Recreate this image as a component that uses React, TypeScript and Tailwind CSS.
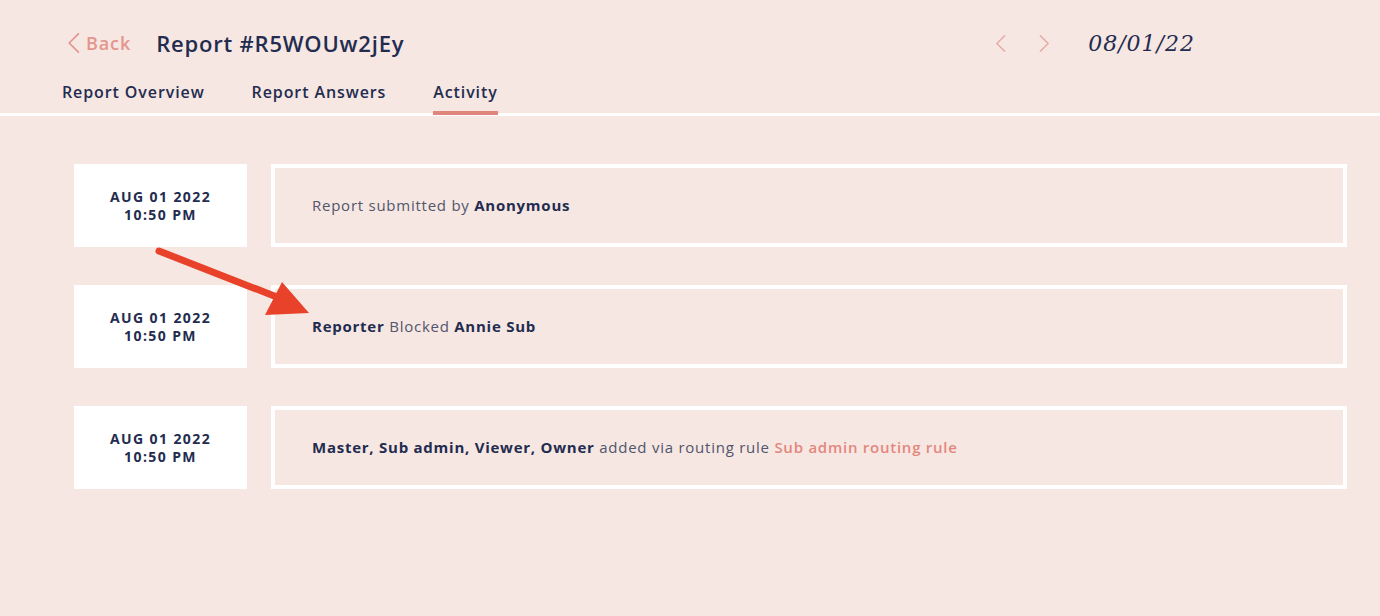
import React from "react";

const navy = "text-[#232c4f]";

function Chevron({ dir, className }: { dir: "left" | "right"; className?: string }) {
  return (
    <svg width="12" height="20" viewBox="0 0 12 20" className={className} fill="none">
      {dir === "left" ? (
        <path d="M10.5 1.5 L2 10 L10.5 18.5" stroke="currentColor" strokeWidth="1.6" strokeLinecap="round" strokeLinejoin="round" />
      ) : (
        <path d="M1.5 1.5 L10 10 L1.5 18.5" stroke="currentColor" strokeWidth="1.6" strokeLinecap="round" strokeLinejoin="round" />
      )}
    </svg>
  );
}

function DateCard() {
  return (
    <div className={`w-[173px] h-[83px] shrink-0 bg-white flex flex-col items-center justify-center text-[14px] font-bold leading-[18px] tracking-[1.4px] ${navy}`}>
      <div>AUG 01 2022</div>
      <div>10:50 PM</div>
    </div>
  );
}

function Row({ children }: { children: React.ReactNode }) {
  return (
    <div className="flex gap-[24px] items-stretch">
      <DateCard />
      <div className="flex-1 h-[83px] border-[4px] border-white flex items-center pl-[37px] text-[15px] tracking-[0.75px] text-[#51566b]">
        <div>{children}</div>
      </div>
    </div>
  );
}

export default function App() {
  return (
    <div
      className="relative w-[1380px] h-[616px] bg-[#f6e7e3] overflow-hidden"
      style={{ fontFamily: '"Open Sans", "Liberation Sans", sans-serif' }}
    >
      {/* Header */}
      <div className="relative pl-[62px] pr-[185px] pt-[29px]">
        <div className="flex items-center h-[28px]">
          <div className="flex items-center text-[#e4958c] pl-[5px]">
            <Chevron dir="left" className="w-[13px] h-[22px]" />
            <span className="ml-[6px] text-[18px] font-semibold tracking-[0.9px]">Back</span>
          </div>
          <div className={`ml-[25px] text-[22px] font-semibold tracking-[0.8px] ${navy}`}>Report #R5WOUw2jEy</div>
          <div className="ml-auto flex items-center">
            <Chevron dir="left" className="w-[11px] h-[19px] text-[#e7aaa2]" />
            <Chevron dir="right" className="ml-[33px] w-[11px] h-[19px] text-[#e7aaa2]" />
            <span
              className={`ml-[38px] text-[22px] italic tracking-[1px] ${navy}`}
              style={{ fontFamily: '"DejaVu Serif", "Liberation Serif", serif' }}
            >
              08/01/22
            </span>
          </div>
        </div>
        <div className={`mt-[25px] flex gap-[47px] text-[16px] leading-[20px] font-semibold tracking-[0.9px] ${navy}`}>
          <div className="h-[32px]">Report Overview</div>
          <div className="h-[32px]">Report Answers</div>
          <div className="h-[32px] relative">
            Activity
            <div className="absolute left-0 right-0 top-[29px] h-[4px] bg-[#df857c] z-10" />
          </div>
        </div>
      </div>
      <div className="mt-[-1px] h-[3px] bg-white" />

      {/* Activity list */}
      <div className="pl-[74px] pr-[33px] pt-[48px] flex flex-col gap-[38px]">
        <Row>
          Report submitted by <b className={`font-bold ${navy}`}>Anonymous</b>
        </Row>
        <Row>
          <b className={`font-bold ${navy}`}>Reporter</b> Blocked <b className={`font-bold ${navy}`}>Annie Sub</b>
        </Row>
        <Row>
          <b className={`font-bold ${navy}`}>Master, Sub admin, Viewer, Owner</b> added via routing rule{" "}
          <span className="font-semibold text-[#e3877e]">Sub admin routing rule</span>
        </Row>
      </div>

      {/* Annotation arrow */}
      <svg className="absolute left-0 top-0 pointer-events-none" width="1380" height="616">
        <line x1="159" y1="251" x2="287" y2="301" stroke="#e8432a" strokeWidth="7" strokeLinecap="round" />
        <polygon points="282,282 265,315 309,313" fill="#e8432a" />
      </svg>
    </div>
  );
}
